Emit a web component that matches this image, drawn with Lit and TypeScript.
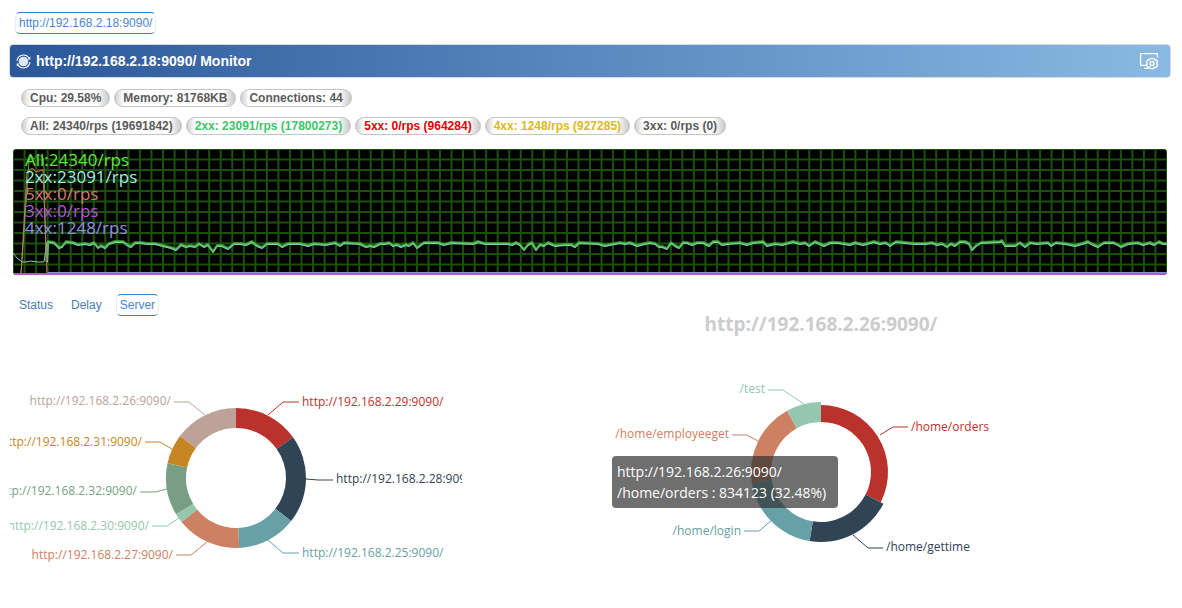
import { LitElement, html, svg, css } from "lit";
import { customElement, property, state } from "lit/decorators.js";
import { classMap } from "lit/directives/class-map.js";

interface Slice {
  name: string;
  color: string;
  from: number;
  to: number;
  radius: number;
  line: string;
  x: number;
  y: number;
  side: "start" | "end";
}

const INNER_RADIUS = 50;

const point = (cx: number, cy: number, r: number, deg: number): string => {
  const a = (deg * Math.PI) / 180;
  return `${(cx + r * Math.sin(a)).toFixed(2)} ${(cy - r * Math.cos(a)).toFixed(2)}`;
};

const ringPath = (cx: number, cy: number, s: Slice): string => {
  const large = s.to - s.from > 180 ? 1 : 0;
  return (
    `M${point(cx, cy, s.radius, s.from)}` +
    `A${s.radius} ${s.radius} 0 ${large} 1 ${point(cx, cy, s.radius, s.to)}` +
    `L${point(cx, cy, INNER_RADIUS, s.to)}` +
    `A${INNER_RADIUS} ${INNER_RADIUS} 0 ${large} 0 ${point(cx, cy, INNER_RADIUS, s.from)}Z`
  );
};

const SERVERS: Slice[] = [
  { name: "http://192.168.2.29:9090/", color: "#bb322d", from: 0, to: 54.5, radius: 70, line: "258,91 273,78 289,78", x: 292, y: 82, side: "start" },
  { name: "http://192.168.2.28:9090/", color: "#304455", from: 54.5, to: 128, radius: 70, line: "296,155 308,156 323,156", x: 326, y: 159, side: "start" },
  { name: "http://192.168.2.25:9090/", color: "#67a0a7", from: 128, to: 177.4, radius: 70, line: "258,216 273,229 289,229", x: 292, y: 233, side: "start" },
  { name: "http://192.168.2.27:9090/", color: "#cd8062", from: 177.4, to: 231.1, radius: 70, line: "197,218 181,231 166,231", x: 163, y: 235, side: "end" },
  { name: "http://192.168.2.30:9090/", color: "#95c7ae", from: 231.1, to: 238.9, radius: 70, line: "169,194 157,202 142,202", x: 139, y: 206, side: "end" },
  { name: "http://192.168.2.32:9090/", color: "#789f84", from: 238.9, to: 282.1, radius: 70, line: "157,165 145,168 130,168", x: 127, y: 171, side: "end" },
  { name: "http://192.168.2.31:9090/", color: "#c68523", from: 282.1, to: 306.8, radius: 70, line: "162,125 150,118 135,118", x: 132, y: 122, side: "end" },
  { name: "http://192.168.2.26:9090/", color: "#bca299", from: 306.8, to: 360, radius: 70, line: "195,91 179,78 164,78", x: 161, y: 81, side: "end" },
];

const ROUTES: Slice[] = [
  { name: "/home/orders", color: "#bb322d", from: 0, to: 116.9, radius: 67, line: "409,111 422,103 437,103", x: 440, y: 107, side: "start" },
  { name: "/home/gettime", color: "#304455", from: 116.9, to: 189.4, radius: 70, line: "382,211 397,224 412,224", x: 415, y: 227, side: "start" },
  { name: "/home/login", color: "#67a0a7", from: 189.4, to: 261.2, radius: 70, line: "301,196 288,207 273,207", x: 270, y: 211, side: "end" },
  { name: "/home/employeeget", color: "#cd8062", from: 261.2, to: 331, radius: 70, line: "287,117 276,111 261,111", x: 258, y: 114, side: "end" },
  { name: "/test", color: "#95c7ae", from: 331, to: 360, radius: 70, line: "333,80 312,66 297,66", x: 294, y: 69, side: "end" },
];

const TRAFFIC =
  "34,113 35,93 41,94 46,99 49,98 53,93 60,94 65,96 72,95 77,96 81,94 85,99 88,97 92,99 96,95 102,93 110,93 114,96 118,98 122,94 128,94 134,95 142,95 150,97 158,99 163,101 168,96 173,98 177,97 182,98 186,95 191,98 195,96 200,103 204,97 209,97 215,100 221,95 227,95 233,96 239,93 244,97 249,99 254,95 265,95 269,98 275,95 287,95 295,97 301,95 313,96 322,94 327,97 331,94 347,95 353,98 357,97 361,98 367,95 372,95 376,94 380,97 384,96 388,98 393,96 396,97 400,94 404,99 411,94 425,94 431,96 438,94 460,95 465,93 472,95 495,95 499,96 503,94 507,96 511,101 515,96 519,94 523,101 527,96 531,97 535,94 542,97 552,96 558,96 562,98 566,94 585,95 592,97 607,94 612,95 617,94 624,97 632,95 637,94 642,95 646,98 649,98 654,100 658,94 662,97 666,99 670,94 674,94 679,96 684,94 690,94 696,97 700,93 705,93 709,96 715,95 727,94 734,96 740,94 750,93 754,97 762,95 769,96 780,93 787,95 792,94 796,97 802,93 811,97 817,94 825,94 837,96 842,94 850,96 861,93 867,95 873,94 877,97 883,93 892,94 902,95 912,95 919,94 924,96 929,95 934,98 938,95 942,97 947,93 952,93 956,95 959,101 963,97 968,94 987,93 989,92 992,97 1002,97 1007,94 1012,98 1017,94 1024,95 1035,94 1038,97 1043,94 1052,95 1062,97 1069,95 1075,93 1080,96 1085,98 1091,94 1101,94 1108,98 1115,95 1125,94 1130,96 1137,94 1141,96 1146,93 1150,95 1154,95";

@customElement("rate-chart")
export class RateChart extends LitElement {
  static styles = css`
    :host {
      display: block;
      position: relative;
      height: 126px;
      border-radius: 4px;
      overflow: hidden;
      background: #000;
    }
    .plot {
      display: block;
      width: 100%;
      height: 100%;
    }
    .grid {
      stroke: #1c510c;
      stroke-width: 2;
    }
    .series {
      fill: none;
      stroke-width: 2;
      stroke-linejoin: round;
    }
    .burst {
      stroke-width: 1;
    }
    .legend {
      position: absolute;
      top: 2px;
      left: 12px;
      margin: 0;
      padding: 0;
      list-style: none;
      font: 17px/17px "Open Sans", "Noto Sans", sans-serif;
    }
    .all { color: #63e63c; stroke: #45b532; }
    .ok { color: #a3ece4; stroke: #7fcfb4; }
    .err { color: #dd7770; stroke: #cf706a; }
    .moved { color: #b455d0; stroke: #b455c8; }
    .client { color: #9090e0; stroke: #9090e0; }
  `;

  render() {
    const columns = Array.from({ length: 101 }, (_, i) => i * 11.54);
    const rows = Array.from({ length: 13 }, (_, i) => i * 10.5);
    return html`
      <svg class="plot" viewBox="0 0 1154 126" preserveAspectRatio="none" role="img" aria-label="Requests per second">
        <g class="grid">
          ${columns.map((x) => svg`<line x1=${x} x2=${x} y1="0" y2="126" />`)}
          ${rows.map((y) => svg`<line x1="0" x2="1154" y1=${y} y2=${y} />`)}
        </g>
        <polyline class="series client" points="35,124 1154,124" />
        <polyline class="series moved" points="0,125 1154,125" />
        <polyline class="series burst all" points="8,125 16,12 18,6 21,10 25,5 30,9 31,20 33,113" />
        <polyline class="series burst ok" points="0,104 4,109 9,113 13,113 18,112 24,113 31,113 34,93" />
        <polyline class="series ok" points=${TRAFFIC} />
        <polyline class="series all" transform="translate(0 -1)" points=${TRAFFIC} stroke-opacity="0.7" />
        <polyline class="series burst err" points="8,125 14,23 19,19 23,23 30,21 34,125" />
      </svg>
      <ul class="legend">
        <li class="all">All:24340/rps</li>
        <li class="ok">2xx:23091/rps</li>
        <li class="err">5xx:0/rps</li>
        <li class="moved">3xx:0/rps</li>
        <li class="client">4xx:1248/rps</li>
      </ul>
    `;
  }
}

@customElement("ring-chart")
export class RingChart extends LitElement {
  @property({ attribute: false }) slices: Slice[] = [];
  @property({ type: Number }) width = 0;
  @property({ type: Number }) cx = 0;
  @property({ type: Number }) cy = 0;
  @property() heading = "";

  static styles = css`
    :host {
      display: block;
      min-width: 0;
    }
    .canvas {
      display: block;
      width: 100%;
      height: 288px;
      overflow: hidden;
    }
    .label {
      font: 12px "Open Sans", "Noto Sans", sans-serif;
    }
    .heading {
      font: bold 19px "Open Sans", "Noto Sans", sans-serif;
      fill: #ccc;
      text-anchor: middle;
    }
    .leader {
      fill: none;
      stroke-width: 1;
    }
  `;

  render() {
    return html`
      <svg class="canvas" viewBox="0 -8 ${this.width} 288" role="img" aria-label="Share of requests">
        ${this.heading ? svg`<text class="heading" x=${this.cx} y="7">${this.heading}</text>` : ""}
        ${this.slices.map(
          (s) => svg`
            <path d=${ringPath(this.cx, this.cy, s)} fill=${s.color} />
            <polyline class="leader" points=${s.line} stroke=${s.color} />
            <text class="label" x=${s.x} y=${s.y} fill=${s.color} text-anchor=${s.side}>${s.name}</text>
          `
        )}
      </svg>
    `;
  }
}

@customElement("app-root")
export class AppRoot extends LitElement {
  @state() private tab = "Server";

  static styles = css`
    :host {
      display: block;
      box-sizing: border-box;
      padding: 12px 11px 0 9px;
      background: #fff;
      color: #5a5a5a;
      font: 12px/20px "Liberation Sans", Arial, sans-serif;
    }
    .hosts {
      display: flex;
      padding-left: 6px;
      margin-bottom: 10px;
    }
    .tab {
      box-sizing: border-box;
      height: 22px;
      padding: 0 3px;
      border: 1px solid transparent;
      border-radius: 5px;
      background: none;
      color: #4a7bb5;
      font: inherit;
      text-decoration: none;
      white-space: nowrap;
      cursor: pointer;
    }
    .active {
      border-color: #3b7bc4 #e6eff8;
      color: #4a86d4;
    }
    .bar {
      display: flex;
      align-items: center;
      box-sizing: border-box;
      height: 34px;
      padding: 0 11px 0 6px;
      gap: 5px;
      border: 1px solid #d5dbe2;
      border-radius: 4px;
      background: linear-gradient(to right, #2b579a, #8ab9e3);
      color: #fff;
    }
    .title {
      flex: 1;
      margin: 0;
      font-size: 14px;
      font-weight: bold;
    }
    .refresh {
      display: block;
      width: 15px;
      height: 15px;
    }
    .settings {
      display: flex;
      padding: 0;
      border: 0;
      background: none;
      color: inherit;
      cursor: pointer;
    }
    .settings-icon {
      width: 20px;
      height: 18px;
    }
    .pills {
      display: flex;
      flex-wrap: wrap;
      gap: 4px;
      margin-top: 11px;
      padding-left: 12px;
    }
    .pills + .pills {
      margin-top: 10px;
    }
    .pill {
      box-sizing: border-box;
      height: 18px;
      padding: 0 8px;
      border: 1px solid #c4c4c4;
      border-radius: 9px;
      background: linear-gradient(to right, #cdcdcd, #fff 8px, #fff calc(100% - 12px), #c8c8c8);
      font-weight: bold;
      line-height: 16px;
    }
    .ok { color: #3ac569; }
    .err { color: #e60000; }
    .client { color: #dcb921; }
    .chart {
      margin: 14px 4px 0;
    }
    .tabs {
      display: flex;
      gap: 10px;
      margin-top: 19px;
      padding-left: 6px;
    }
    .rings {
      display: grid;
      grid-template-columns: 452fr 700fr;
      gap: 9px;
      padding-left: 1px;
    }
    .routes {
      position: relative;
    }
    .tooltip {
      position: absolute;
      top: 140px;
      left: 141px;
      padding: 5px 12px 5px 5px;
      border-radius: 4px;
      background: rgba(50, 50, 50, 0.7);
      color: #fff;
      font: 14px/21px "Open Sans", "Noto Sans", sans-serif;
      white-space: nowrap;
    }
  `;

  private renderTab(name: string) {
    return html`<button
      type="button"
      class=${classMap({ tab: true, active: this.tab === name })}
      @click=${() => (this.tab = name)}
    >${name}</button>`;
  }

  render() {
    return html`
      <nav class="hosts">
        <a class="tab active" href="#host">http://192.168.2.18:9090/</a>
      </nav>
      <header class="bar">
        <svg class="refresh" viewBox="0 0 15 15" fill="none" stroke="#fff" aria-hidden="true">
          <circle cx="7.5" cy="7.5" r="4.8" fill="#fff" fill-opacity="0.85" stroke="none" />
          <path d="M1 6.8A6.6 6.6 0 0 1 13 4M14 8.2A6.6 6.6 0 0 1 2 11" stroke-width="1.1" />
          <path d="M14.3 2.4V5.4H11.6zM.7 12.6V9.6H3.4z" fill="#fff" stroke="none" />
        </svg>
        <h1 class="title">http://192.168.2.18:9090/ Monitor</h1>
        <button type="button" class="settings" aria-label="Settings">
          <svg class="settings-icon" viewBox="0 0 20 18" fill="none" stroke="#fff" stroke-width="1.3" aria-hidden="true">
            <path d="M18.4 5.5V1.6H1.6V13.4H7M5 16.4H9.5" />
            <path d="M11.4 6.3H14.6L15.3 7.8 17.1 7.6 18.7 10.2 17.7 11.5 18.7 12.8 17.1 15.4 15.3 15.2 14.6 16.7H11.4L10.7 15.2 8.9 15.4 7.3 12.8 8.3 11.5 7.3 10.2 8.9 7.6 10.7 7.8Z" stroke-linejoin="round" />
            <circle cx="13" cy="11.5" r="2" />
          </svg>
        </button>
      </header>
      <div class="pills">
        <span class="pill">Cpu: 29.58%</span>
        <span class="pill">Memory: 81768KB</span>
        <span class="pill">Connections: 44</span>
      </div>
      <div class="pills">
        <span class="pill">All: 24340/rps (19691842)</span>
        <span class="pill ok">2xx: 23091/rps (17800273)</span>
        <span class="pill err">5xx: 0/rps (964284)</span>
        <span class="pill client">4xx: 1248/rps (927285)</span>
        <span class="pill">3xx: 0/rps (0)</span>
      </div>
      <rate-chart class="chart"></rate-chart>
      <nav class="tabs">${["Status", "Delay", "Server"].map((t) => this.renderTab(t))}</nav>
      <main class="rings">
        <ring-chart .slices=${SERVERS} width="452" cx="226" cy="154"></ring-chart>
        <div class="routes">
          <ring-chart .slices=${ROUTES} width="700" cx="350" cy="148" heading="http://192.168.2.26:9090/"></ring-chart>
          <div class="tooltip" role="tooltip">http://192.168.2.26:9090/<br />/home/orders : 834123 (32.48%)</div>
        </div>
      </main>
    `;
  }
}
